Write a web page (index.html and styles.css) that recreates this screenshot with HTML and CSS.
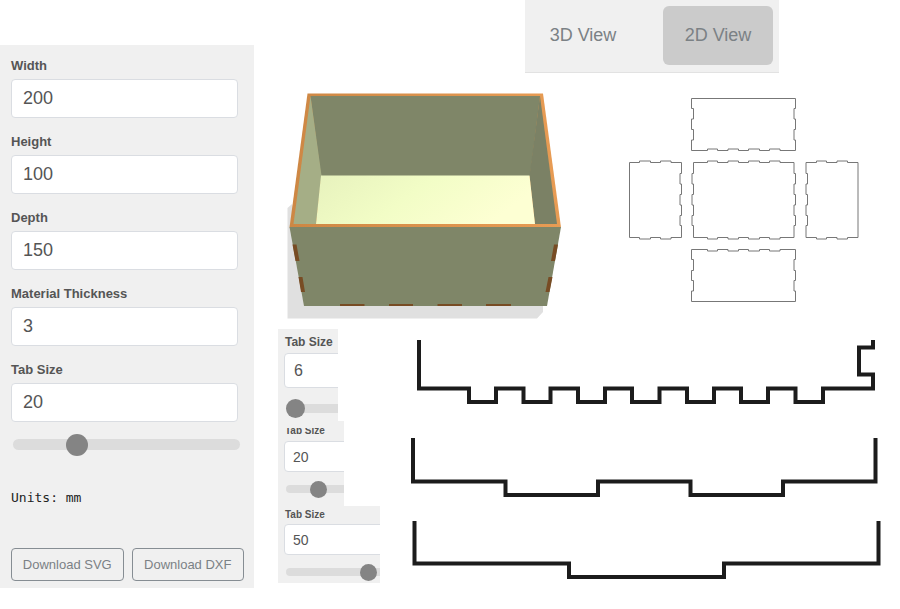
FILE: index.html
```
<!DOCTYPE html>
<html lang="en">

<head>
    <meta charset="UTF-8">
    <meta name="viewport" content="width=device-width, initial-scale=1.0">
    <title>Box Generator</title>
    <link rel="stylesheet" href="styles.css">
</head>

<body>

    <div class="layout">
        <!-- Box settings -->
        <form class="sidebar">
            <label for="width">Width</label>
            <input type="number" id="width" value="200">

            <label for="height">Height</label>
            <input type="number" id="height" value="100">

            <label for="depth">Depth</label>
            <input type="number" id="depth" value="150">

            <label for="thickness">Material Thickness</label>
            <input type="number" id="thickness" value="3">

            <label for="tabSize">Tab Size</label>
            <input type="number" id="tabSize" value="20">
            <input type="range" id="tabRange" min="6" max="60" value="20" aria-label="Tab Size">

            <p class="units">Units: mm</p>

            <div class="downloads">
                <button type="button">Download SVG</button>
                <button type="button">Download DXF</button>
            </div>
        </form>

        <main class="content">
            <nav class="view-tabs">
                <button type="button">3D View</button>
                <button type="button" class="active">2D View</button>
            </nav>

            <div class="views">
                <!-- 3D preview -->
                <svg class="view-3d" viewBox="287 93 275 226" role="img" aria-label="3D box">
                    <defs>
                        <linearGradient id="floor" x1="0" y1="0" x2="1" y2="0.3">
                            <stop offset="0" stop-color="#e7f2bd" />
                            <stop offset="0.5" stop-color="#f2fdc6" />
                            <stop offset="1" stop-color="#fdffd3" />
                        </linearGradient>
                        <linearGradient id="rim" x1="0" y1="0" x2="1" y2="0">
                            <stop offset="0" stop-color="#cd8744" />
                            <stop offset="1" stop-color="#e89c54" />
                        </linearGradient>
                    </defs>
                    <path fill="#e0e0e0" d="M287.5 208L292 204L310 280H543V312L537 318.5H287.5Z" />
                    <path fill="url(#rim)" d="M307.5 93.5H543L561 227.5H289.5Z" />
                    <path fill="#7f8668" d="M310.5 96H540L530 176H321Z" />
                    <path fill="#a5ae86" d="M310.5 96L321.5 175.5L316 224H293.5Z" />
                    <path fill="#7b8165" d="M540 96L557 224H535L529.5 175.5Z" />
                    <path fill="url(#floor)" d="M321 175.5H529.5L535 224H316Z" />
                    <path fill="#7f8668" d="M289.5 227H561L547 306H304Z" />
                    <path fill="#784c24" d="M292.5 244.5H296.5L299.5 261H295.5ZM298.5 277H302.5L305 292H301Z" />
                    <path fill="#784c24" d="M554 244.5H558L555 261H551ZM548.5 277H552.5L549.5 292H545.5Z" />
                    <path fill="#784c24" d="M340 304H364.5V306H340ZM389 304H413V306H389ZM437.5 304H462V306H437.5ZM486 304H511V306H486Z" />
                </svg>

                <!-- Flat panels -->
                <svg class="view-2d" viewBox="628 97 231 206" role="img" aria-label="2D panels">
                    <path d="M691.5 98.5H795.5V108.5H794V119H795.5V129.5H794V140H795.5V150.5H780V149H769.5V150.5H759.5V149H748.5V150.5H738.5V149H728V150.5H717.5V149H707.5V150.5H691.5V140H693.5V129.5H691.5V119H693.5V108.5H691.5Z" />
                    <path d="M629.5 162.5H639.5V161H650.5V162.5H660.5V161H671V162.5H681.5V173.5H680V184H681.5V194.5H680V205H681.5V215.5H680V225.5H681.5V237.5H671V239H660.5V237.5H650.5V239H639.5V237.5H629.5Z" />
                    <path d="M693.5 162.5H707.5V161H717.5V162.5H728V161H738.5V162.5H748.5V161H759.5V162.5H769.5V161H780V162.5H794V173.5H795.5V184H794V194.5H795.5V205H794V215.5H795.5V225.5H794V237.5H780V239H769.5V237.5H759.5V239H748.5V237.5H738.5V239H728V237.5H717.5V239H707.5V237.5H693.5V225.5H692V215.5H693.5V205H692V194.5H693.5V184H692V173.5H693.5Z" />
                    <path d="M806 162.5H816.5V161H826.5V162.5H837V161H847.5V162.5H858V237.5H847.5V239H837V237.5H826.5V239H816.5V237.5H806V225.5H807.5V215.5H806V205H807.5V194.5H806V184H807.5V173.5H806Z" />
                    <path d="M691.5 249.5H707.5V251H717.5V249.5H728V251H738.5V249.5H748.5V251H759.5V249.5H769.5V251H780V249.5H795.5V259.5H794V270.5H795.5V280.5H794V291H795.5V301.5H691.5V291H693.5V280.5H691.5V270.5H693.5V259.5H691.5Z" />
                </svg>
            </div>

            <!-- Tab size samples -->
            <section class="samples">
                <div class="sample small-tabs">
                    <div class="panel">
                        <label for="tab6">Tab Size</label>
                        <input type="number" id="tab6" value="6">
                        <input type="range" min="6" max="60" value="6" aria-label="Tab Size">
                    </div>
                    <svg class="profile" viewBox="410 340 471 65" aria-hidden="true">
                        <path d="M419 338V388.5H469V402H496V388.5H523.5V402H550.5V388.5H578V402H605V388.5H632V402H659.5V388.5H687V402H714V388.5H741V402H768V388.5H795.5V402H823V388.5H873V374.5H859V347.5H873V338" />
                    </svg>
                </div>

                <div class="sample medium-tabs">
                    <div class="panel">
                        <label for="tab20">Tab Size</label>
                        <input type="number" id="tab20" value="20">
                        <input type="range" min="6" max="60" value="20" aria-label="Tab Size">
                    </div>
                    <svg class="profile" viewBox="410 438 471 60" aria-hidden="true">
                        <path d="M413 436V481.5H505.5V495H598V481.5H690.5V495H783V481.5H875.5V436" />
                    </svg>
                </div>

                <div class="sample large-tabs">
                    <div class="panel">
                        <label for="tab50">Tab Size</label>
                        <input type="number" id="tab50" value="50">
                        <input type="range" min="6" max="60" value="50" aria-label="Tab Size">
                    </div>
                    <svg class="profile" viewBox="410 521 471 60" aria-hidden="true">
                        <path d="M414.5 519V563.5H569V577H724V563.5H878.5V519" />
                    </svg>
                </div>
            </section>
        </main>
    </div>

</body>

</html>
```
FILE: styles.css
```
* {
    box-sizing: border-box;
}

body {
    margin: 0;
    background-color: #fff;
    font-family: "Liberation Sans", Arial, sans-serif;
    color: #555;
}

.layout {
    display: flex;
    align-items: flex-start;
}

/* Form controls */
label {
    display: block;
    font-size: 13px;
    font-weight: bold;
    line-height: 20px;
}

input[type="number"] {
    display: block;
    height: 39px;
    padding: 0 11px;
    border: 1px solid #dadde2;
    border-radius: 4px;
    background-color: #fff;
    color: #555;
    font-family: inherit;
    font-size: 18px;
}

input[type="range"] {
    display: block;
    -webkit-appearance: none;
    appearance: none;
    height: 11px;
    margin: 0;
    border-radius: 6px;
    background-color: #dcdcdc;
}

input[type="range"]::-webkit-slider-thumb {
    -webkit-appearance: none;
    width: 22px;
    height: 22px;
    border-radius: 50%;
    background-color: #848484;
}

button {
    border: none;
    background: none;
    color: #7b8185;
    font-family: inherit;
    cursor: pointer;
}

/* Sidebar */
.sidebar {
    flex: 0 0 254px;
    margin-top: 45px;
    padding: 11px 10px 7px 11px;
    background-color: #f0f0f0;
}

.sidebar input[type="number"] {
    width: 227px;
    margin: 3px 0 14px;
}

.sidebar input[type="range"] {
    width: 227px;
    margin: 17px 0 0 2px;
}

.units {
    margin: 38px 0 40px;
    color: #222;
    font-family: "DejaVu Sans Mono", monospace;
    font-size: 13px;
    line-height: 20px;
}

.downloads {
    display: flex;
    gap: 8px;
}

.downloads button {
    flex: 1;
    height: 33px;
    padding: 0;
    border: 1px solid #868d93;
    border-radius: 4px;
    font-size: 13px;
    white-space: nowrap;
}

/* Content */
.content {
    flex: 1;
    min-width: 0;
    padding: 0 19px 0 24px;
}

.view-tabs {
    display: flex;
    justify-content: space-between;
    width: 254px;
    margin-left: 247px;
    padding: 6px 6px 7px 3px;
    border-bottom: 1px solid #e2e2e2;
    background-color: #f0f0f0;
}

.view-tabs button {
    width: 110px;
    height: 59px;
    border-radius: 6px;
    font-size: 18px;
}

.view-tabs .active {
    background-color: #cbcbcb;
}

.views {
    display: flex;
    align-items: flex-start;
    gap: 66px;
    padding: 20px 0 10px 9px;
}

.view-3d {
    flex: 0 0 275px;
    height: 226px;
}

.view-2d {
    flex: 0 0 231px;
    height: 206px;
    margin-top: 4px;
    fill: none;
    stroke: #777;
}

/* Samples */
.sample {
    display: grid;
    grid-template-columns: 132px 1fr;
    align-items: start;
}

.profile {
    display: block;
    width: 100%;
    fill: none;
    stroke: #1c1c1c;
    stroke-width: 4;
}

.panel {
    overflow: hidden;
    padding-left: 6px;
    background-color: #f0f0f0;
}

.panel label {
    padding-left: 1px;
    font-size: 10px;
    line-height: 16px;
}

.panel input[type="number"] {
    width: 120px;
    height: 31px;
    margin-top: 1px;
    padding: 0 8px;
    font-size: 14px;
}

.panel input[type="range"] {
    width: 108px;
    height: 8px;
    margin: 13px 0 0 2px;
}

.panel input[type="range"]::-webkit-slider-thumb {
    width: 17px;
    height: 17px;
}

.small-tabs .panel {
    width: 60px;
    padding-top: 5px;
    padding-bottom: 8px;
}

.small-tabs label {
    font-size: 12px;
}

.small-tabs input[type="number"] {
    height: 35px;
    margin-top: 3px;
    padding: 0 9px;
    font-size: 16px;
}

.small-tabs input[type="range"] {
    height: 9px;
    margin-top: 16px;
}

.small-tabs input[type="range"]::-webkit-slider-thumb {
    width: 19px;
    height: 19px;
}

.small-tabs .profile {
    margin-top: 11px;
}

.medium-tabs .panel {
    width: 66px;
    padding-top: 7px;
    padding-bottom: 13px;
}

/* the top of this label is cut off */
.medium-tabs label {
    height: 8px;
    overflow: hidden;
    line-height: 5px;
}

.medium-tabs input[type="number"] {
    margin-top: 5px;
}

.medium-tabs .profile {
    margin-top: 17px;
}

.large-tabs .panel {
    width: 102px;
    padding-top: 1px;
    padding-bottom: 7px;
}

.large-tabs .profile {
    margin-top: 15px;
}
```
